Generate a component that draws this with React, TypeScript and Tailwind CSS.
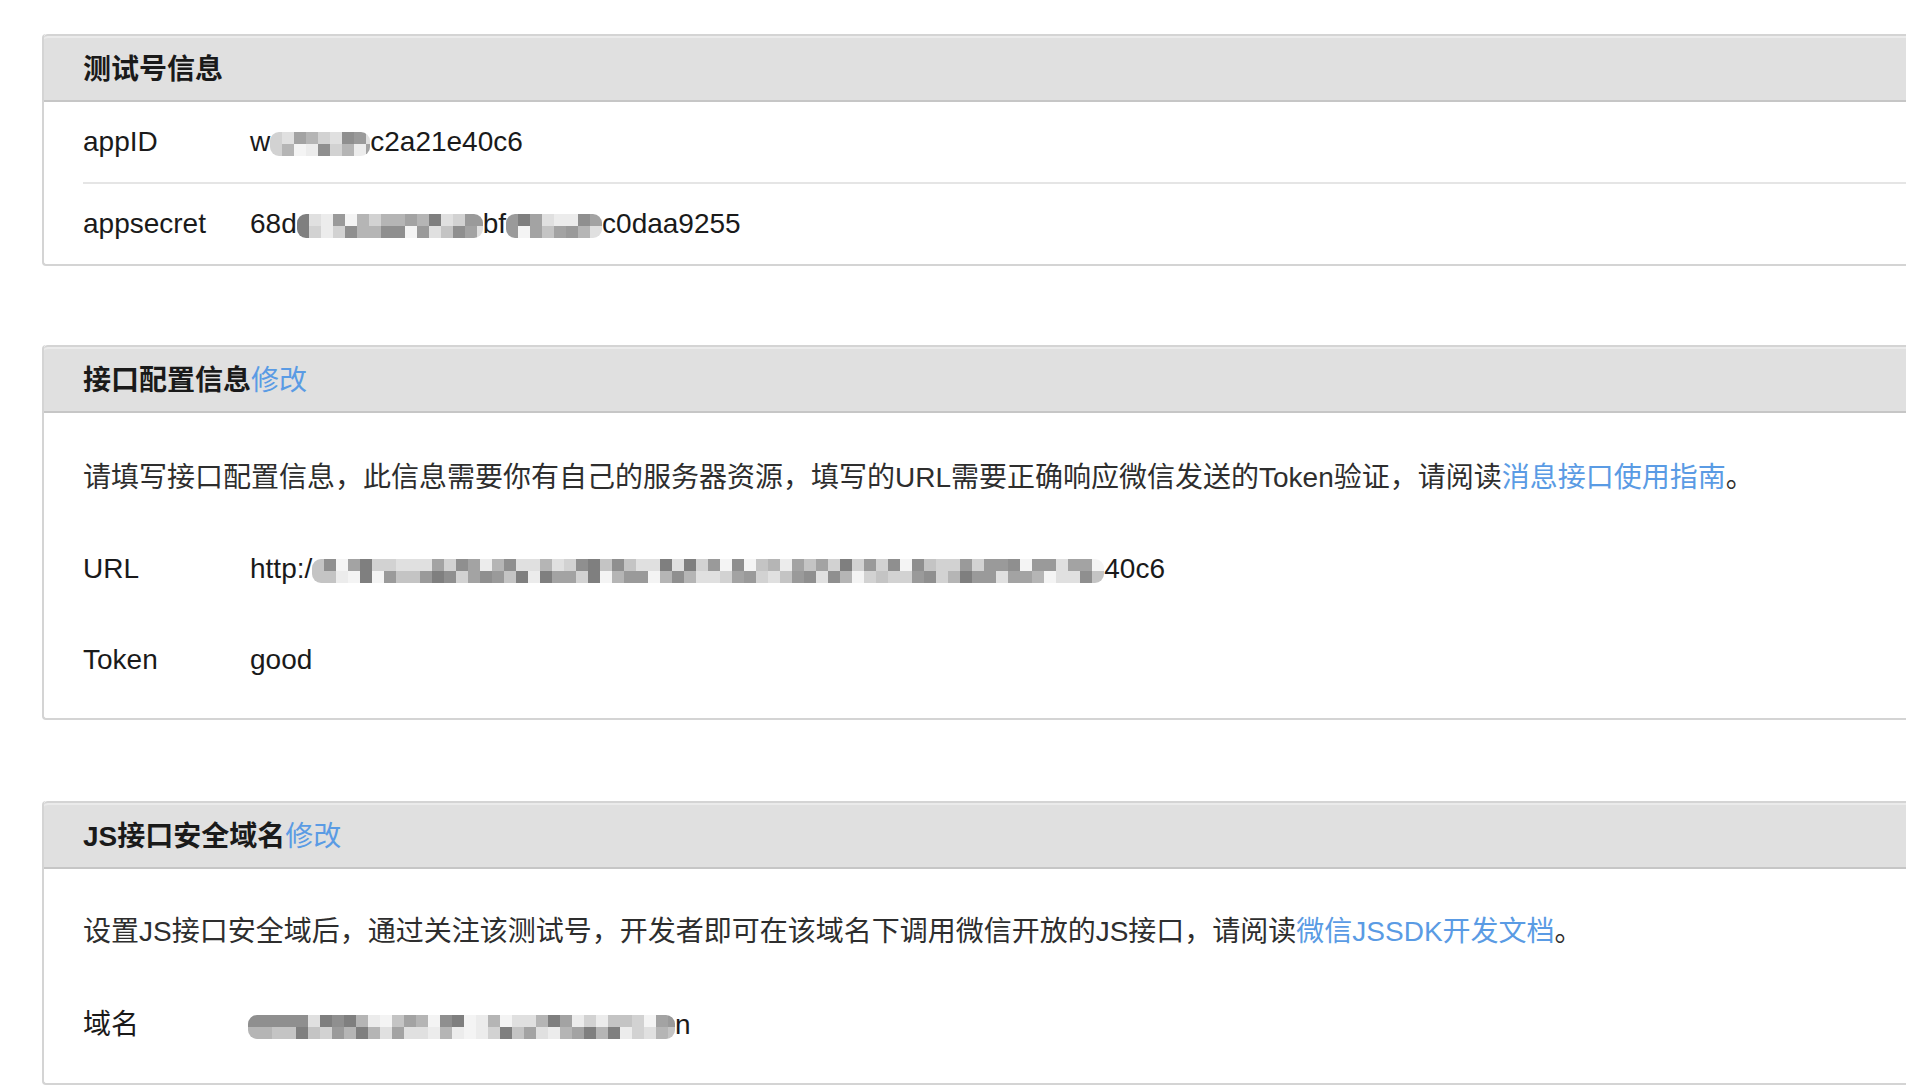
import React from "react";

const FONT = { fontFamily: '"Liberation Sans", "Noto Sans CJK SC", sans-serif' };

const GRAYS = ["#8f8f8f", "#a3a3a3", "#b5b5b5", "#c4c4c4", "#d2d2d2", "#e0e0e0", "#ececec", "#f4f4f4", "#9a9a9a", "#7f7f7f"];

// pixelated blur patch standing in for the masked characters
function Mosaic({ width, seed }: { width: number; seed: number }) {
  const cell = 12;
  const cols = Math.ceil(width / cell);
  let s = seed;
  const next = () => {
    s = (s * 9301 + 49297) % 233280;
    return s / 233280;
  };
  const cells: React.ReactNode[] = [];
  for (let r = 0; r < 2; r++) {
    for (let c = 0; c < cols; c++) {
      const v = next();
      const fill = GRAYS[Math.floor(v * GRAYS.length)];
      cells.push(<rect key={`${r}-${c}`} x={c * cell} y={r * cell} width={cell} height={cell} fill={fill} />);
    }
  }
  const id = `m${seed}`;
  return (
    <svg width={width} height={24} className="inline-block align-middle">
      <defs>
        <clipPath id={id}>
          <rect x={0} y={0} width={width} height={24} rx={9} />
        </clipPath>
      </defs>
      <g clipPath={`url(#${id})`}>{cells}</g>
    </svg>
  );
}

function PanelHeader({ title, edit }: { title: string; edit?: boolean }) {
  return (
    <div className="h-[68px] flex items-center pt-[3px] pl-[39px] bg-[#e0e0e0] border-t-2 border-t-[#d4d4d4] border-b-2 border-b-[#c6c6c6] shadow-[inset_0_2px_0_#ebebeb] rounded-tl-[4px]">
      <h3 className="text-[28px] font-bold text-[#1a1a1a] leading-none">
        {title}
        {edit && <a className="font-normal text-[#5a9be4] cursor-pointer">修改</a>}
      </h3>
    </div>
  );
}

function Panel({ children }: { children: React.ReactNode }) {
  return (
    <section className="ml-[42px] border-l-2 border-l-[#d4d4d4] border-b-2 border-b-[#d4d4d4] rounded-l-[4px]">
      {children}
    </section>
  );
}

function Field({ label, children, className = "" }: { label: string; children: React.ReactNode; className?: string }) {
  return (
    <div className={`flex items-center text-[28px] text-[#1a1a1a] ${className}`}>
      <span className="w-[167px] shrink-0">{label}</span>
      <span className="whitespace-nowrap">{children}</span>
    </div>
  );
}

export default function App() {
  return (
    <div className="min-h-screen bg-white pt-[34px] overflow-hidden" style={FONT}>
      <Panel>
        <PanelHeader title="测试号信息" />
        <div className="pl-[39px]">
          <Field label="appID" className="h-[82px] border-b-2 border-b-[#e5e5e5]">
            w<Mosaic width={100} seed={7} />c2a21e40c6
          </Field>
          <Field label="appsecret" className="h-[80px]">
            68d<Mosaic width={186} seed={19} />bf<Mosaic width={96} seed={41} />c0daa9255
          </Field>
        </div>
      </Panel>

      <div className="mt-[79px]">
        <Panel>
          <PanelHeader title="接口配置信息" edit />
          <div className="pl-[39px] pt-[45px] pb-[38px]">
            <p className="text-[28px] leading-[40px] text-[#2e2e2e]">
              请填写接口配置信息，此信息需要你有自己的服务器资源，填写的URL需要正确响应微信发送的Token验证，请阅读
              <a className="text-[#5a9be4] cursor-pointer">消息接口使用指南</a>。
            </p>
            <Field label="URL" className="h-[40px] mt-[51px]">
              http:/<Mosaic width={792} seed={53} />40c6
            </Field>
            <Field label="Token" className="h-[40px] mt-[51px]">
              good
            </Field>
          </div>
        </Panel>
      </div>

      <div className="mt-[81px]">
        <Panel>
          <PanelHeader title="JS接口安全域名" edit />
          <div className="pl-[39px] pt-[43px] pb-[38px]">
            <p className="text-[28px] leading-[40px] text-[#2e2e2e]">
              设置JS接口安全域后，通过关注该测试号，开发者即可在该域名下调用微信开放的JS接口，请阅读
              <a className="text-[#5a9be4] cursor-pointer">微信JSSDK开发文档</a>。
            </p>
            <Field label="域名" className="h-[40px] mt-[53px]">
              <span className="-ml-[2px]">
                <Mosaic width={427} seed={71} />n
              </span>
            </Field>
          </div>
        </Panel>
      </div>
    </div>
  );
}
